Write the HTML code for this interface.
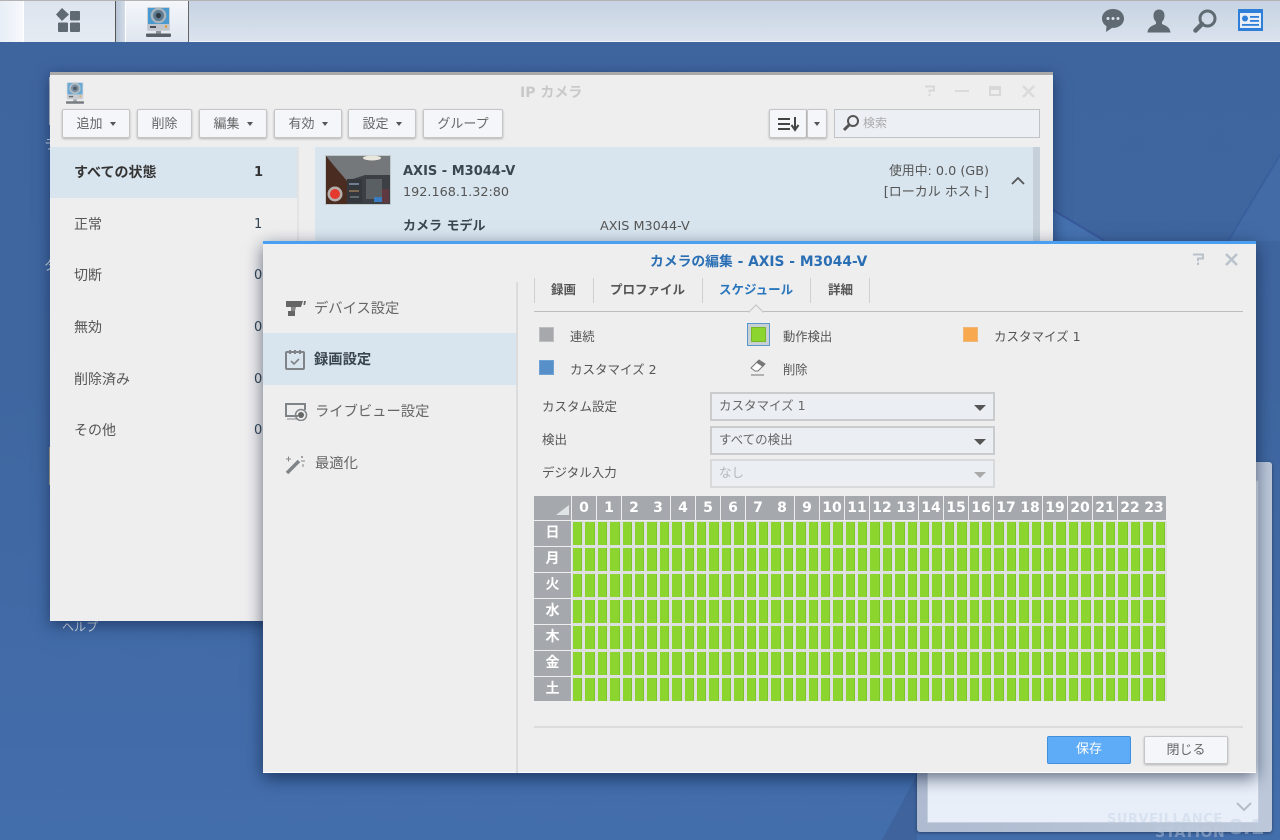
<!DOCTYPE html>
<html lang="ja"><head><meta charset="utf-8"><title>IP カメラ</title>
<style>
*{box-sizing:border-box}
html,body{margin:0;padding:0;width:1280px;height:840px;overflow:hidden}
body{position:relative;background:linear-gradient(#3f659f,#3f669f 45%,#436eac);font:14px/20px "DejaVu Sans","Noto Sans CJK JP",sans-serif;color:#555}
.a{position:absolute}
.t{position:absolute;white-space:nowrap;line-height:20px;height:20px}
.b{font-weight:bold}
.btn{position:absolute;top:109px;height:29px;background:#f5f6fa;border:1px solid #c6c6c6;border-radius:2px;box-shadow:0 1px 2px rgba(0,0,0,.25);color:#666;font-size:13px;line-height:29px;text-align:center;white-space:nowrap}
.btn u{display:inline-block;width:0;height:0;border:3px solid transparent;border-top:4px solid #555;border-bottom:0;margin-left:7px;vertical-align:2px;text-decoration:none}
.sel{position:absolute;left:710px;width:285px;height:29px;background:#ebeff4;border:2px solid #c9cbcd;color:#666;font-size:12.500px;line-height:23px;padding-left:7px}
.sel:after{content:"";position:absolute;right:7px;top:11px;border:6px solid transparent;border-top:6px solid #555;border-bottom:0}
.sel.off:after{border-top-color:#aaa}
.h{position:absolute;top:496px;width:24px;height:24px;background:#a5a8ad;color:#fff;font-weight:bold;font-size:14px;line-height:24px;text-align:center}
.d{position:absolute;left:534px;width:37px;height:25px;background:#a5a8ad;color:#fff;font-weight:bold;font-size:14px;line-height:25px;text-align:center}
#g{position:absolute;left:572px;top:521px;width:595px;height:180px;background:#dedfdf;display:grid;grid-template-columns:repeat(48,1fr)}
#g i{display:block;margin:0 2px 0 1px;background:#8bd52e;border-right:1px solid #7fc42c}
#r{position:absolute;left:572px;top:521px;width:595px;height:180px;background:repeating-linear-gradient(to bottom,#dedfdf 0,#dedfdf 1px,transparent 1px,transparent 24px,#dedfdf 24px,#dedfdf 26px)}
</style></head><body>

<!-- desktop decoration -->
<svg class="a" style="left:0;top:0" width="1280" height="840">
<polygon points="1280,155 1228,241 1280,241" fill="#436ba6"/>
<path d="M1280 155L1228 241" stroke="#39609c" stroke-width="2"/>
<polygon points="1053,210 1105,241 1053,241" fill="#4673b0"/>
<path d="M1053 210L1105 241" stroke="#38599a" stroke-width="2"/>
<polygon points="918,773 882,840 917,840" fill="#3e639d"/>
</svg>

<!-- top bar -->
<div class="a" style="left:0;top:0;width:1280px;height:42px;background:linear-gradient(#c7d3e3,#dae2ed);border-top:1px solid #b3b3b3;border-bottom:1px solid #f0f3f7"></div>
<div class="a" style="left:0;top:1px;width:23px;height:41px;background:linear-gradient(90deg,#e8eef6,#f6f9fc)"></div>
<div class="a" style="left:23px;top:1px;width:93px;height:41px;background:linear-gradient(#dde4ee,#e6ebf3);border:1px solid #fff;border-width:0 1px 0 1px"></div>
<div class="a" style="left:115px;top:1px;width:1px;height:41px;background:#555"></div>
<div class="a" style="left:116px;top:1px;width:9px;height:41px;background:linear-gradient(90deg,#b8c5d6,#d3dce8)"></div>
<div class="a" style="left:125px;top:1px;width:63px;height:41px;background:linear-gradient(#f4f6fa,#e0e6f0);border-left:1px solid #fff"></div>
<div class="a" style="left:188px;top:1px;width:1px;height:41px;background:#666"></div>

<svg class="a" style="left:55px;top:8px" width="26" height="26" viewBox="0 0 26 26" fill="#5f6a72">
<path d="M7 0l7 6.500L7 13 1 6.500z"/><rect x="15" y="3" width="10" height="9.500" rx="1"/><rect x="3" y="14.500" width="10" height="9.500" rx="1"/><rect x="15" y="14.500" width="10" height="9.500" rx="1"/></svg>

<svg width="0" height="0" style="position:absolute"><symbol id="cam" viewBox="0 0 25 30">
<rect x="1" y="0" width="23" height="24" rx="1.500" fill="#c9ced4"/>
<rect x="2" y="1" width="21" height="16" fill="#4a9ad0"/>
<rect x="2" y="17" width="21" height="6" fill="#c0c5cb"/>
<circle cx="12.500" cy="8.500" r="7.800" fill="#a9b4bd"/><circle cx="12.500" cy="8.500" r="5.500" fill="#5f7b92"/><circle cx="12.500" cy="8.500" r="2.600" fill="#2e3944"/>
<rect x="4" y="19" width="6" height="2" fill="#4a4f55"/><circle cx="20" cy="19.500" r="1.300" fill="#e09a3a"/>
<rect x="10" y="24" width="5" height="3" fill="#8c949b"/><rect x="0" y="26.500" width="25" height="3.500" rx="1" fill="#5a6168"/>
</symbol></svg>
<svg class="a" style="left:146px;top:7px" width="25" height="30"><use href="#cam" width="25" height="30"/></svg>

<!-- top right icons -->
<svg class="a" style="left:1101px;top:8px" width="24" height="25" viewBox="0 0 24 25"><path d="M12 1C5.500 1 1 5.300 1 10.500c0 3.300 1.800 6 4.500 7.700L5 24l6-4.100h1c6.500 0 11-4.200 11-9.400S18.500 1 12 1z" fill="#5f6a72"/><circle cx="7" cy="10.500" r="1.500" fill="#dce3ec"/><circle cx="12" cy="10.500" r="1.500" fill="#dce3ec"/><circle cx="17" cy="10.500" r="1.500" fill="#dce3ec"/></svg>
<svg class="a" style="left:1147px;top:9px" width="24" height="24" viewBox="0 0 24 23"><path d="M12 0c-3.600 0-5.500 2.500-5.500 6 0 2.700 1 5 2.500 6.300v2.200C6.300 16 1 17 .5 23h23c-.5-6-5.800-7-8.500-8.500v-2.200c1.500-1.300 2.500-3.600 2.500-6.300 0-3.500-1.900-6-5.500-6z" fill="#5f6a72"/></svg>
<svg class="a" style="left:1193px;top:9px" width="24" height="24" viewBox="0 0 24 24"><circle cx="14.500" cy="9.500" r="7.500" fill="none" stroke="#5f6a72" stroke-width="3"/><path d="M9 15L2.500 21.500" stroke="#5f6a72" stroke-width="4.500" stroke-linecap="round"/></svg>
<svg class="a" style="left:1238px;top:9px" width="25" height="22" viewBox="0 0 25 22"><rect x="0" y="0" width="25" height="22" fill="#2f7fd8"/><rect x="2" y="4" width="21" height="15" fill="#e6edf6"/><circle cx="7" cy="9.500" r="3" fill="#2f7fd8"/><rect x="12" y="7" width="9" height="1.800" fill="#2f7fd8"/><rect x="12" y="11" width="9" height="1.800" fill="#2f7fd8"/><rect x="4" y="15" width="17" height="1.800" fill="#2f7fd8"/></svg>

<!-- desktop labels -->
<div class="a" style="left:49px;top:77px;width:2px;height:48px;background:#c8ccd2"></div>
<div class="a" style="left:49px;top:447px;width:2px;height:38px;background:#b5ae90"></div>
<div class="t" style="left:44px;top:136px;color:#d8e0ea;font-size:13px">ラ</div>
<div class="t" style="left:44px;top:257px;color:#d8e0ea;font-size:13px">タ</div>
<div class="t" style="left:62px;top:617px;color:#d8e0ea;font-size:12px">ヘルプ</div>

<!-- back-right window -->
<div class="a" style="left:917px;top:462px;width:355px;height:370px;background:linear-gradient(90deg,#aebbd0,#bcc8da);border-radius:3px;box-shadow:0 1px 3px rgba(0,0,0,.4)"></div>
<div class="a" style="left:927px;top:480px;width:332px;height:343px;background:#e8eff9;border:1px solid #c5cfdd"></div>
<svg class="a" style="left:1236px;top:802px" width="16" height="10"><path d="M1 1l7 7 7-7" fill="none" stroke="#b4bcc8" stroke-width="2"/></svg>
<div class="t b" style="left:1107px;top:810px;color:rgba(190,205,225,.4);font-size:13px;letter-spacing:.5px">SURVEILLANCE</div>
<div class="t b" style="left:1155px;top:823px;color:rgba(190,205,225,.45);font-size:14px;letter-spacing:.5px">STATION</div>
<div class="t b" style="left:1229px;top:817px;color:rgba(190,205,225,.45);font-size:20px">8.1</div>

<!-- IP camera window -->
<div class="a" style="left:50px;top:72px;width:1003px;height:549px;background:#eee;border-top:3px solid #a9a9a9;box-shadow:0 4px 14px rgba(10,25,60,.55)"></div>
<svg class="a" style="left:66px;top:82px;opacity:.8" width="18" height="22"><use href="#cam" width="18" height="22"/></svg>
<div class="t b" style="left:520px;top:83px;color:#c9c9c9;font-size:14px">IP カメラ</div>
<svg class="a" style="left:924px;top:85px" width="12" height="12"><path d="M1 1.500h9v4H5.500v2M5.500 9v2" fill="none" stroke="#d8d8d8" stroke-width="2"/></svg>
<div class="a" style="left:955px;top:90px;width:14px;height:2px;background:#dadada"></div>
<div class="a" style="left:989px;top:86px;width:12px;height:10px;border:2px solid #d8d8d8;border-top-width:4px"></div>
<svg class="a" style="left:1022px;top:85px" width="13" height="13"><path d="M1 1l11 11M12 1L1 12" stroke="#dadada" stroke-width="2.500"/></svg>

<div class="btn" style="left:62px;width:68px">追加<u></u></div>
<div class="btn" style="left:137px;width:55px">削除</div>
<div class="btn" style="left:199px;width:68px">編集<u></u></div>
<div class="btn" style="left:274px;width:68px">有効<u></u></div>
<div class="btn" style="left:348px;width:68px">設定<u></u></div>
<div class="btn" style="left:423px;width:80px">グループ</div>
<div class="btn" style="left:769px;width:38px"></div>
<svg class="a" style="left:778px;top:116px" width="22" height="16"><path d="M0 3h12M0 8h12M0 13h12" stroke="#444" stroke-width="2"/><path d="M17 1v11M13.500 9l3.500 5 3.500-5" stroke="#444" stroke-width="2" fill="none"/></svg>
<div class="btn" style="left:807px;width:20px"><u style="margin:0"></u></div>
<div class="a" style="left:834px;top:109px;width:206px;height:29px;background:#ecf0f5;border:1px solid #c0c2c4"></div>
<svg class="a" style="left:842px;top:114px" width="18" height="18"><circle cx="11" cy="7" r="5" fill="none" stroke="#555" stroke-width="2"/><path d="M7 11l-5 5" stroke="#555" stroke-width="3"/></svg>
<div class="t" style="left:863px;top:113px;font-size:12px;color:#aaa">検索</div>

<!-- sidebar list -->
<div class="a" style="left:50px;top:147px;width:247px;height:51px;background:#d8e5ee"></div>
<div class="a" style="left:297px;top:147px;width:2px;height:474px;background:#e3e3e3"></div>
<div class="t b" style="left:74px;top:163px;color:#333">すべての状態</div><div class="t b" style="left:254px;top:163px;color:#333;font-size:13px">1</div>
<div class="t" style="left:74px;top:215px">正常</div><div class="t" style="left:254px;top:215px;color:#345;font-size:13px">1</div>
<div class="t" style="left:74px;top:266px">切断</div><div class="t" style="left:254px;top:266px;color:#345;font-size:13px">0</div>
<div class="t" style="left:74px;top:318px">無効</div><div class="t" style="left:254px;top:318px;color:#345;font-size:13px">0</div>
<div class="t" style="left:74px;top:370px">削除済み</div><div class="t" style="left:254px;top:370px;color:#345;font-size:13px">0</div>
<div class="t" style="left:74px;top:421px">その他</div><div class="t" style="left:254px;top:421px;color:#345;font-size:13px">0</div>

<!-- camera card -->
<div class="a" style="left:315px;top:147px;width:718px;height:95px;background:#d8e5ee"></div>
<div class="a" style="left:1033px;top:147px;width:7px;height:95px;background:#c5d0da"></div>
<svg class="a" style="left:325px;top:155px" width="66" height="50" viewBox="0 0 66 50">
<rect width="66" height="50" fill="#bfc9cc"/>
<rect x="1" y="1" width="64" height="48" fill="#3c4045"/>
<polygon points="1,1 65,1 65,20 40,20 22,26 10,12" fill="#75787a"/>
<polygon points="1,1 10,12 22,26 22,49 1,49" fill="#4a2c20"/>
<ellipse cx="47" cy="3" rx="9" ry="2.500" fill="#e8e6dd"/>
<rect x="41" y="24" width="16" height="20" fill="#595f63"/>
<rect x="22" y="24" width="15" height="24" fill="#34373b"/><rect x="24" y="28" width="10" height="2" fill="#6f7f90"/><rect x="24" y="35" width="10" height="2" fill="#7d6a50"/><rect x="25" y="41" width="9" height="2" fill="#5f6a70"/>
<rect x="49" y="42" width="8" height="5" fill="#3a7cc0"/><rect x="57" y="34" width="7" height="14" fill="#5e3a40"/>
<circle cx="10" cy="39" r="7.500" fill="#d0d0d0" opacity=".8"/><circle cx="10" cy="39" r="5" fill="#e4392f"/>
</svg>
<div class="t b" style="left:403px;top:162px;color:#3c4650;font-size:13px">AXIS - M3044-V</div>
<div class="t" style="left:403px;top:183px;color:#555;font-size:12.800px">192.168.1.32:80</div>
<div class="t" style="right:291px;top:162px;font-size:12.800px;color:#555">使用中: 0.0 (GB)</div>
<div class="t" style="right:291px;top:183px;font-size:13px;color:#555">[ローカル ホスト]</div>
<svg class="a" style="left:1011px;top:176px" width="14" height="10"><path d="M1 8l6-6 6 6" fill="none" stroke="#555" stroke-width="1.800"/></svg>
<div class="t b" style="left:403px;top:217px;color:#3c4650;font-size:13px">カメラ モデル</div>
<div class="t" style="left:600px;top:217px;font-size:12.800px;color:#555">AXIS M3044-V</div>

<!-- edit dialog -->
<div class="a" style="left:263px;top:241px;width:993px;height:532px;background:#eee;border-top:3px solid #4a9ff0;border-bottom:1px solid #fff;box-shadow:0 5px 16px rgba(5,20,50,.6)"></div>
<div class="t b" style="left:650px;top:252px;color:#2a6fb4;font-size:13.800px">カメラの編集 - AXIS - M3044-V</div>
<svg class="a" style="left:1192px;top:253px" width="13" height="13"><path d="M1 1.500h10v4H6v2.500M6 9.500V12" fill="none" stroke="#bac2cb" stroke-width="2"/></svg>
<svg class="a" style="left:1225px;top:253px" width="13" height="13"><path d="M1 1l11 11M12 1L1 12" stroke="#bac2cb" stroke-width="2.500"/></svg>

<div class="a" style="left:516px;top:282px;width:2px;height:491px;background:#dcdcdc"></div>
<div class="a" style="left:263px;top:333px;width:253px;height:52px;background:#d8e5ee"></div>

<svg class="a" style="left:285px;top:299px" width="22" height="18" viewBox="0 0 22 18" fill="#666"><polygon points="1,2 18,2 16,8 1,8"/><rect x="3" y="12" width="7" height="5"/><polygon points="6,8 11,8 10,12 6,12" fill="#888"/><polygon points="19,2 21,2 20,6 18.500,6"/></svg>
<svg class="a" style="left:285px;top:349px" width="20" height="21" viewBox="0 0 20 21"><rect x="1" y="3" width="18" height="17" rx="1" fill="none" stroke="#808488" stroke-width="2"/><path d="M5 1v4M10 1v4M15 1v4" stroke="#808488" stroke-width="2"/><path d="M6 12l3 3 5-5" fill="none" stroke="#808488" stroke-width="1.600"/></svg>
<svg class="a" style="left:284px;top:402px" width="24" height="19" viewBox="0 0 24 19"><path d="M14 14H2V2h19v6" fill="none" stroke="#808488" stroke-width="2"/><path d="M3 17h11" stroke="#aaa" stroke-width="1.500"/><circle cx="17" cy="13" r="5.500" fill="none" stroke="#808488" stroke-width="1.500"/><circle cx="17" cy="13" r="3" fill="#666"/></svg>
<svg class="a" style="left:285px;top:455px" width="22" height="19" viewBox="0 0 22 19"><path d="M2 18L14 6" stroke="#808488" stroke-width="3.500"/><path d="M1 4h5M3.500 1.500v5M16 6h4M18 9v3" stroke="#888" stroke-width="1"/><circle cx="17" cy="2" r="1" fill="#888"/></svg>
<div class="t" style="left:314px;top:299px;font-size:14.300px;color:#666">デバイス設定</div>
<div class="t b" style="left:314px;top:350px;font-size:14.300px;color:#3a444e">録画設定</div>
<div class="t" style="left:315px;top:402px;font-size:14.300px;color:#666">ライブビュー設定</div>
<div class="t" style="left:315px;top:454px;font-size:14.300px;color:#666">最適化</div>

<!-- tabs -->
<div class="a" style="left:534px;top:278px;width:1px;height:25px;background:#d0d0d0"></div>
<div class="a" style="left:593px;top:278px;width:1px;height:25px;background:#d0d0d0"></div>
<div class="a" style="left:702px;top:278px;width:1px;height:25px;background:#d0d0d0"></div>
<div class="a" style="left:810px;top:278px;width:1px;height:25px;background:#d0d0d0"></div>
<div class="a" style="left:869px;top:278px;width:1px;height:25px;background:#d0d0d0"></div>
<div class="t b" style="left:551px;top:280px;color:#555;font-size:12.500px">録画</div>
<div class="t b" style="left:610px;top:280px;color:#555;font-size:12.500px">プロファイル</div>
<div class="t b" style="left:719px;top:280px;color:#2a76bd;font-size:12.500px">スケジュール</div>
<div class="t b" style="left:828px;top:280px;color:#555;font-size:12.500px">詳細</div>
<div class="a" style="left:534px;top:311px;width:709px;height:1px;background:#bdbdbd"></div>
<svg class="a" style="left:748px;top:304px" width="16" height="9"><path d="M0 8h1l7-7 7 7h1" fill="#eee" stroke="#c4c4c4"/></svg>

<!-- legend -->
<div class="a" style="left:539px;top:327px;width:15px;height:15px;background:#a6a8ab;border:1px solid #bcbec0"></div>
<div class="t" style="left:570px;top:327px;font-size:12.300px">連続</div>
<div class="a" style="left:747px;top:323px;width:23px;height:23px;background:#c9d0d4;border:1px solid #5a97cd"></div>
<div class="a" style="left:751px;top:327px;width:15px;height:15px;background:#8bd52e;border:1px solid #79b829"></div>
<div class="t" style="left:783px;top:327px;font-size:12.300px">動作検出</div>
<div class="a" style="left:963px;top:327px;width:15px;height:15px;background:#f8a84e;border:1px solid #f0b878"></div>
<div class="t" style="left:994px;top:327px;font-size:12.500px">カスタマイズ 1</div>
<div class="a" style="left:539px;top:360px;width:15px;height:15px;background:#5790c9;border:1px solid #6fa2d4"></div>
<div class="t" style="left:570px;top:360px;font-size:12.500px">カスタマイズ 2</div>
<svg class="a" style="left:750px;top:359px" width="16" height="18" viewBox="0 0 16 18"><path d="M1 9l8-8 6 4-7 7H5z" fill="#fff" stroke="#777" stroke-width="1"/><path d="M6 3.500l7 4.500 2-3-6-4z" fill="#777"/><path d="M1 16h13" stroke="#888" stroke-width="1.200"/></svg>
<div class="t" style="left:783px;top:360px;font-size:12.300px">削除</div>

<!-- form -->
<div class="t" style="left:542px;top:397px;font-size:12.500px">カスタム設定</div>
<div class="sel" style="top:392px">カスタマイズ 1</div>
<div class="t" style="left:542px;top:430px;font-size:12.500px">検出</div>
<div class="sel" style="top:426px">すべての検出</div>
<div class="t" style="left:542px;top:463px;font-size:12.500px">デジタル入力</div>
<div class="sel off" style="top:459px;background:#ebeef2;border-color:#d8d9da;color:#b5b8bb">なし</div>

<!-- schedule header -->
<div class="h" style="left:534px;width:37px"></div>
<svg class="a" style="left:555px;top:504px" width="15" height="12"><polygon points="14,1 14,11 1,11" fill="#dfe5e6"/></svg>
<div class="h" style="left:572px">0</div><div class="h" style="left:597px">1</div><div class="h" style="left:622px">2</div><div class="h" style="left:646px">3</div><div class="h" style="left:671px">4</div><div class="h" style="left:696px">5</div><div class="h" style="left:721px">6</div><div class="h" style="left:746px">7</div><div class="h" style="left:770px">8</div><div class="h" style="left:795px">9</div><div class="h" style="left:820px">10</div><div class="h" style="left:845px">11</div><div class="h" style="left:870px">12</div><div class="h" style="left:894px">13</div><div class="h" style="left:919px">14</div><div class="h" style="left:944px">15</div><div class="h" style="left:969px">16</div><div class="h" style="left:994px">17</div><div class="h" style="left:1018px">18</div><div class="h" style="left:1043px">19</div><div class="h" style="left:1068px">20</div><div class="h" style="left:1093px">21</div><div class="h" style="left:1118px">22</div><div class="h" style="left:1142px">23</div>

<div class="d" style="top:521px">日</div>
<div class="d" style="top:547px">月</div>
<div class="d" style="top:573px">火</div>
<div class="d" style="top:599px">水</div>
<div class="d" style="top:625px">木</div>
<div class="d" style="top:651px">金</div>
<div class="d" style="top:677px;height:24px">土</div>

<div id="g"><i></i><i></i><i></i><i></i><i></i><i></i><i></i><i></i><i></i><i></i><i></i><i></i><i></i><i></i><i></i><i></i><i></i><i></i><i></i><i></i><i></i><i></i><i></i><i></i><i></i><i></i><i></i><i></i><i></i><i></i><i></i><i></i><i></i><i></i><i></i><i></i><i></i><i></i><i></i><i></i><i></i><i></i><i></i><i></i><i></i><i></i><i></i><i></i></div>
<div id="r"></div>

<!-- footer -->
<div class="a" style="left:534px;top:726px;width:709px;height:2px;background:#dcdcdc"></div>
<div class="a" style="left:1047px;top:736px;width:84px;height:28px;background:#5eabf7;border:1px solid #408fdf;border-radius:2px;color:#fff;font-size:13px;line-height:26px;text-align:center">保存</div>
<div class="a" style="left:1144px;top:736px;width:84px;height:28px;background:#f5f6fa;border:1px solid #c6c6c6;border-radius:2px;box-shadow:0 1px 2px rgba(0,0,0,.25);color:#666;font-size:13px;line-height:27px;text-align:center">閉じる</div>

</body></html>
